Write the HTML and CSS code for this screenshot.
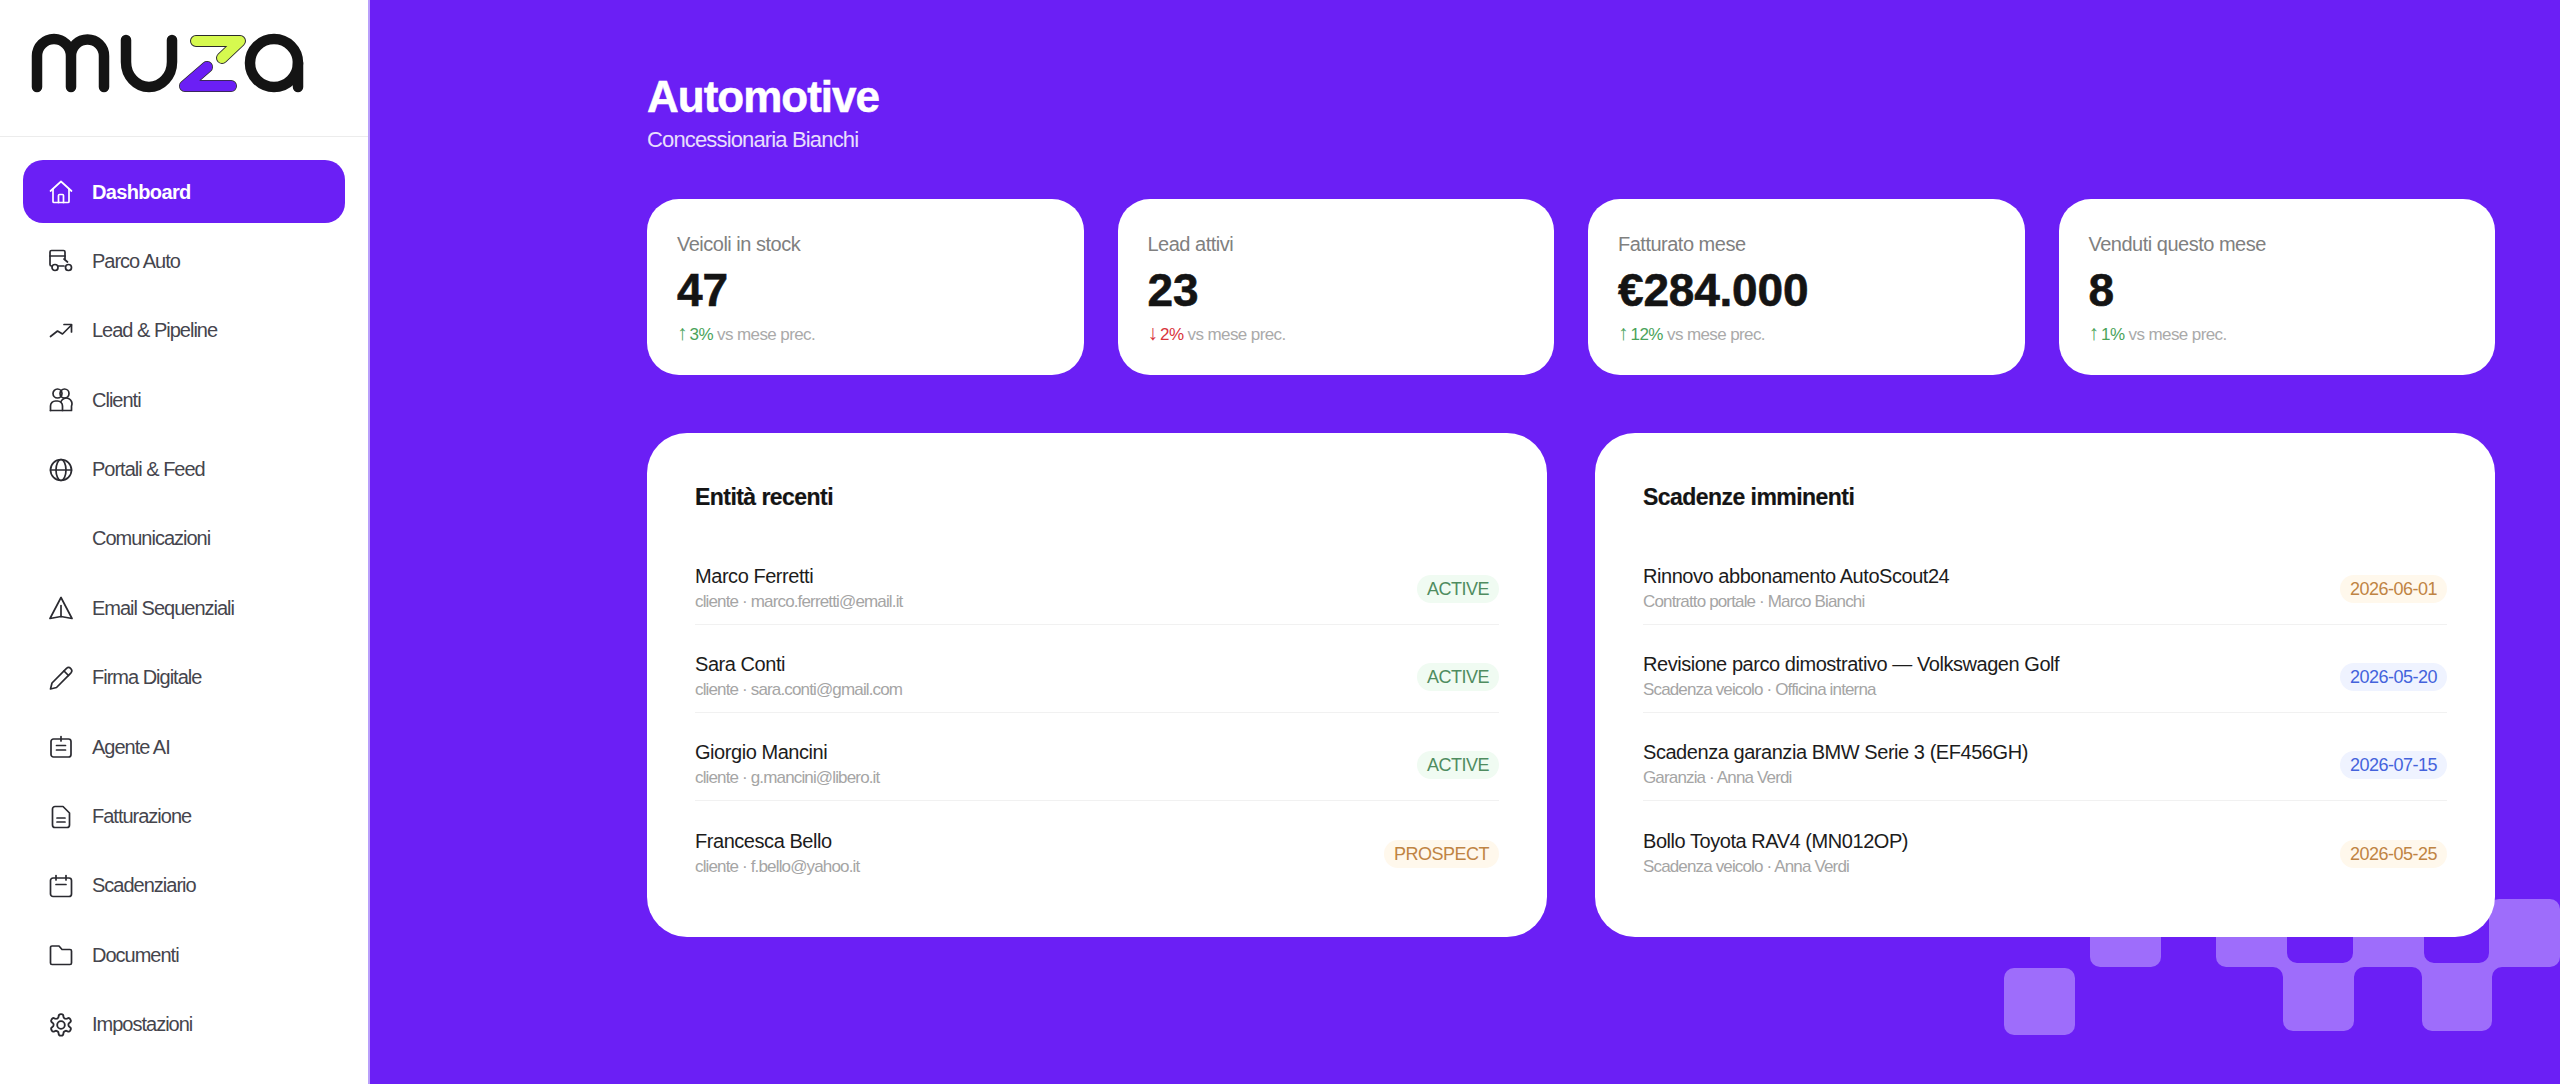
FILE: index.html
```html
<!DOCTYPE html>
<html lang="it">
<head>
    <meta charset="UTF-8">
    <meta name="viewport" content="width=device-width, initial-scale=1.0">
    <title>Muza - Automotive</title>
    <link rel="stylesheet" href="styles.css">
</head>
<body>
    <aside class="sidebar">
        <div class="logo">
            <svg class="logo-mark" viewBox="0 0 340 120" width="340" height="120" fill="none" stroke-linecap="round" stroke-linejoin="round">
                <path class="logo-ink" d="M37 87V56a16 16 0 0 1 34 0V87M71 56a16 16 0 0 1 33 0V87"/>
                <path class="logo-ink" d="M126 40V62a23 25 0 0 0 46 0V40"/>
                <circle class="logo-ink" cx="274" cy="63" r="24"/>
                <path class="logo-ink" d="M298 63V87"/>
                <path class="logo-edge" d="M196 41H240L222 58"/>
                <path class="logo-lime" d="M196 41H240L222 58"/>
                <path class="logo-edge" d="M207 67L185 86H231"/>
                <path class="logo-violet" d="M207 67L185 86H231"/>
            </svg>
        </div>
        <nav class="nav">
            <a class="nav-item active">
                <svg class="icon" viewBox="0 0 24 24"><path d="M1.500 11 12 1.500 22.500 11"/><path d="M4 8.800V21.500a1 1 0 0 0 1 1h14a1 1 0 0 0 1-1V8.800"/><path d="M9.500 22.500v-7a1 1 0 0 1 1-1h3a1 1 0 0 1 1 1v7"/></svg>
                <span>Dashboard</span>
            </a>
            <a class="nav-item">
                <svg class="icon" viewBox="0 0 24 24"><path d="M2.500 17A1.500 1.500 0 0 1 1 15.500V3A1.500 1.500 0 0 1 2.500 1.500h12A1.500 1.500 0 0 1 16 3v7"/><path d="M1 7h15"/><path d="M9 17h6"/><path d="M15 10l3.500 3"/><circle cx="6" cy="18.500" r="3"/><circle cx="19.500" cy="18.500" r="3"/></svg>
                <span>Parco Auto</span>
            </a>
            <a class="nav-item">
                <svg class="icon" viewBox="0 0 24 24"><path d="M1.500 17.500 8.500 12l5 3 9-9"/><path d="M15 5.500h7.500V13"/></svg>
                <span>Lead &amp; Pipeline</span>
            </a>
            <a class="nav-item">
                <svg class="icon" viewBox="0 0 24 24"><circle cx="8.500" cy="5.500" r="4.500"/><circle cx="15.500" cy="5.500" r="4.500"/><path d="M1.500 22.500V18a5 5 0 0 1 5-5h2a5 5 0 0 1 5 5v4.500"/><path d="M12 13.500a5 5 0 0 1 10.500 4.500v4.500H1.500"/></svg>
                <span>Clienti</span>
            </a>
            <a class="nav-item">
                <svg class="icon" viewBox="0 0 24 24"><circle cx="12" cy="12" r="10.500"/><ellipse cx="12" cy="12" rx="5" ry="10.500"/><path d="M1.500 12h21"/></svg>
                <span>Portali &amp; Feed</span>
            </a>
            <a class="nav-item">
                <span class="icon-blank"></span>
                <span>Comunicazioni</span>
            </a>
            <a class="nav-item">
                <svg class="icon" viewBox="0 0 24 24"><path d="M12 1.500 1 22.500 12 20.500l11 2Z"/><path d="M12 9.500v11"/></svg>
                <span>Email Sequenziali</span>
            </a>
            <a class="nav-item">
                <svg class="icon" viewBox="0 0 24 24"><path d="M17.500 2.300a3.200 3.200 0 0 1 4.500 4.500L7.500 21.500 1.500 23 3 17Z"/><path d="M15 5l4.500 4.500"/></svg>
                <span>Firma Digitale</span>
            </a>
            <a class="nav-item">
                <svg class="icon" viewBox="0 0 24 24"><rect x="2" y="4" width="20" height="18" rx="2.500"/><path d="M12 1.500V6"/><path d="M7.500 10.500h9"/><path d="M7.500 15h9"/></svg>
                <span>Agente AI</span>
            </a>
            <a class="nav-item">
                <svg class="icon" viewBox="0 0 24 24"><path d="M14 1.500H6A2.500 2.500 0 0 0 3.500 4v16A2.500 2.500 0 0 0 6 22.500h12a2.500 2.500 0 0 0 2.500-2.500V8Z"/><path d="M8 13h8"/><path d="M8 17h8"/></svg>
                <span>Fatturazione</span>
            </a>
            <a class="nav-item">
                <svg class="icon" viewBox="0 0 24 24"><rect x="1.500" y="4" width="21" height="18.500" rx="2.500"/><path d="M7 1.500V6"/><path d="M17 1.500V6"/><path d="M7 10.500h10"/></svg>
                <span>Scadenziario</span>
            </a>
            <a class="nav-item">
                <svg class="icon" viewBox="0 0 24 24"><path d="M21 21.500a1.500 1.500 0 0 0 1.500-1.500V8A1.500 1.500 0 0 0 21 6.500h-8L10 3H3A1.500 1.500 0 0 0 1.500 4.500V20A1.500 1.500 0 0 0 3 21.500Z"/></svg>
                <span>Documenti</span>
            </a>
            <a class="nav-item">
                <svg class="icon" viewBox="1 1 22 22"><path d="M12.200 2h-.4a2 2 0 0 0-2 2v.2a2 2 0 0 1-1 1.700l-.4.2a2 2 0 0 1-2 0l-.2-.1a2 2 0 0 0-2.700.7l-.2.400a2 2 0 0 0 .7 2.700l.2.100a2 2 0 0 1 1 1.700v.5a2 2 0 0 1-1 1.700l-.2.100a2 2 0 0 0-.7 2.700l.2.400a2 2 0 0 0 2.700.7l.2-.1a2 2 0 0 1 2 0l.4.2a2 2 0 0 1 1 1.700v.2a2 2 0 0 0 2 2h.4a2 2 0 0 0 2-2v-.2a2 2 0 0 1 1-1.700l.4-.2a2 2 0 0 1 2 0l.2.100a2 2 0 0 0 2.700-.7l.2-.4a2 2 0 0 0-.7-2.700l-.2-.1a2 2 0 0 1-1-1.700v-.5a2 2 0 0 1 1-1.700l.2-.1a2 2 0 0 0 .7-2.700l-.2-.4a2 2 0 0 0-2.700-.7l-.2.100a2 2 0 0 1-2 0l-.4-.2a2 2 0 0 1-1-1.700V4a2 2 0 0 0-2-2Z"/><circle cx="12" cy="12" r="3.500"/></svg>
                <span>Impostazioni</span>
            </a>
        </nav>
    </aside>

    <main class="main">
        <svg class="deco" viewBox="0 0 2560 1084" width="2560" height="1084">
            <rect x="2004" y="968" width="71" height="67" rx="10"/>
            <rect x="2090" y="900" width="71" height="67" rx="10"/>
            <path d="M2216 900H2287V953a10 10 0 0 0 10 10H2343a10 10 0 0 0 10-10V900H2424V953a10 10 0 0 0 10 10H2479a10 10 0 0 0 10-10V909a10 10 0 0 1 10-10H2550a10 10 0 0 1 10 10V957a10 10 0 0 1-10 10H2502a10 10 0 0 0-10 10V1021a10 10 0 0 1-10 10H2432a10 10 0 0 1-10-10V977a10 10 0 0 0-10-10H2364a10 10 0 0 0-10 10V1021a10 10 0 0 1-10 10H2293a10 10 0 0 1-10-10V977a10 10 0 0 0-10-10H2226a10 10 0 0 1-10-10Z"/>
        </svg>

        <div class="page-head">
            <h1>Automotive</h1>
            <p>Concessionaria Bianchi</p>
        </div>

        <div class="stats">
            <div class="stat">
                <div class="stat-label">Veicoli in stock</div>
                <div class="stat-value">47</div>
                <div class="stat-delta"><span class="up"><span class="arrow">↑</span> 3%</span> vs mese prec.</div>
            </div>
            <div class="stat">
                <div class="stat-label">Lead attivi</div>
                <div class="stat-value">23</div>
                <div class="stat-delta"><span class="down"><span class="arrow">↓</span> 2%</span> vs mese prec.</div>
            </div>
            <div class="stat">
                <div class="stat-label">Fatturato mese</div>
                <div class="stat-value">€284.000</div>
                <div class="stat-delta"><span class="up"><span class="arrow">↑</span> 12%</span> vs mese prec.</div>
            </div>
            <div class="stat">
                <div class="stat-label">Venduti questo mese</div>
                <div class="stat-value">8</div>
                <div class="stat-delta"><span class="up"><span class="arrow">↑</span> 1%</span> vs mese prec.</div>
            </div>
        </div>

        <div class="panels">
            <section class="panel">
                <h2>Entità recenti</h2>
                <div class="row">
                    <div><div class="row-name">Marco Ferretti</div><div class="row-sub">cliente · marco.ferretti@email.it</div></div>
                    <span class="badge green">ACTIVE</span>
                </div>
                <div class="row">
                    <div><div class="row-name">Sara Conti</div><div class="row-sub">cliente · sara.conti@gmail.com</div></div>
                    <span class="badge green">ACTIVE</span>
                </div>
                <div class="row">
                    <div><div class="row-name">Giorgio Mancini</div><div class="row-sub">cliente · g.mancini@libero.it</div></div>
                    <span class="badge green">ACTIVE</span>
                </div>
                <div class="row">
                    <div><div class="row-name">Francesca Bello</div><div class="row-sub">cliente · f.bello@yahoo.it</div></div>
                    <span class="badge orange">PROSPECT</span>
                </div>
            </section>
            <section class="panel">
                <h2>Scadenze imminenti</h2>
                <div class="row">
                    <div><div class="row-name">Rinnovo abbonamento AutoScout24</div><div class="row-sub">Contratto portale · Marco Bianchi</div></div>
                    <span class="badge orange">2026-06-01</span>
                </div>
                <div class="row">
                    <div><div class="row-name">Revisione parco dimostrativo — Volkswagen Golf</div><div class="row-sub">Scadenza veicolo · Officina interna</div></div>
                    <span class="badge blue">2026-05-20</span>
                </div>
                <div class="row">
                    <div><div class="row-name">Scadenza garanzia BMW Serie 3 (EF456GH)</div><div class="row-sub">Garanzia · Anna Verdi</div></div>
                    <span class="badge blue">2026-07-15</span>
                </div>
                <div class="row">
                    <div><div class="row-name">Bollo Toyota RAV4 (MN012OP)</div><div class="row-sub">Scadenza veicolo · Anna Verdi</div></div>
                    <span class="badge orange">2026-05-25</span>
                </div>
            </section>
        </div>
    </main>
</body>
</html>
```

FILE: styles.css
```css
* {
    box-sizing: border-box;
}

html, body {
    height: 100%;
}

body {
    margin: 0;
    display: flex;
    overflow: hidden;
    font-family: "Liberation Sans", Arial, sans-serif;
    background-color: #6b1ff5;
    color: #141414;
}

/* sidebar */
.sidebar {
    width: 370px;
    flex-shrink: 0;
    background-color: white;
    border-right: 2px solid #b99ffa;
}

.logo {
    height: 137px;
    border-bottom: 1px solid #ececec;
}

.logo-mark {
    display: block;
}

.logo-ink {
    stroke: #141414;
    stroke-width: 10.5;
}

.logo-edge {
    stroke: #2b2b2b;
    stroke-width: 12;
}

.logo-lime {
    stroke: #d6f94f;
    stroke-width: 10;
}

.logo-violet {
    stroke: #6b1ff5;
    stroke-width: 10.5;
}

.nav {
    display: flex;
    flex-direction: column;
    gap: 6.4px;
    padding: 23px 23px 0;
}

.nav-item {
    display: flex;
    align-items: center;
    gap: 19px;
    height: 63px;
    padding: 1px 0 0 26px;
    border-radius: 20px;
    font-size: 20px;
    letter-spacing: -1px;
    color: #45454d;
}

.nav-item.active {
    background-color: #6b1ff5;
    color: white;
    font-weight: bold;
    letter-spacing: -0.65px;
}

.icon {
    width: 24px;
    height: 24px;
    flex-shrink: 0;
    fill: none;
    stroke: #2a2a30;
    stroke-width: 1.7;
    stroke-linecap: round;
    stroke-linejoin: round;
}

.active .icon {
    stroke: white;
}

.icon-blank {
    width: 24px;
    flex-shrink: 0;
}

/* main */
.main {
    position: relative;
    flex: 1;
    padding: 71px 65px 0 277px;
}

.deco {
    position: absolute;
    top: 0;
    left: -370px;
    fill: #9e6dfb;
}

.page-head {
    position: relative;
    color: white;
    margin-bottom: 45px;
}

.page-head h1 {
    margin: 0 0 3px;
    font-size: 44px;
    line-height: 52px;
    letter-spacing: -1px;
    -webkit-text-stroke: 0.5px white;
}

.page-head p {
    margin: 0;
    font-size: 22px;
    line-height: 28px;
    letter-spacing: -0.85px;
    opacity: 0.85;
}

.stats {
    position: relative;
    display: grid;
    grid-template-columns: repeat(4, 1fr);
    gap: 34px;
    margin-bottom: 58px;
}

.stat {
    height: 176px;
    padding: 31px 30px 29px;
    background-color: white;
    border-radius: 32px;
}

.stat-label {
    font-size: 20px;
    line-height: 28px;
    letter-spacing: -0.5px;
    color: #808080;
}

.stat-value {
    margin: 7px 0 7px;
    font-size: 46px;
    line-height: 50px;
    font-weight: bold;
    letter-spacing: -0.2px;
    -webkit-text-stroke: 0.6px #141414;
}

.stat-delta {
    font-size: 17px;
    line-height: 24px;
    letter-spacing: -0.6px;
    color: #aaa;
}

.arrow {
    font-size: 21px;
    line-height: 1;
    letter-spacing: -2px;
}

.up {
    color: #4aa35a;
}

.down {
    color: #d8343c;
}

.panels {
    position: relative;
    display: grid;
    grid-template-columns: 1fr 1fr;
    gap: 48px;
}

.panel {
    height: 504px;
    padding: 48px;
    background-color: white;
    border-radius: 40px;
}

.panel h2 {
    margin: 0 0 24px;
    font-size: 23px;
    line-height: 32px;
    letter-spacing: -0.55px;
    -webkit-text-stroke: 0.2px #141414;
}

.row {
    display: flex;
    align-items: center;
    justify-content: space-between;
    height: 88px;
    padding: 26px 0 9px;
    border-bottom: 1px solid #f1f1f1;
}

.row:last-child {
    border-bottom: none;
}

.row-name {
    font-size: 20px;
    line-height: 26px;
    letter-spacing: -0.45px;
    color: #1c1c1c;
}

.row-sub {
    font-size: 17px;
    line-height: 26px;
    letter-spacing: -0.85px;
    color: #a5a5a5;
}

.badge {
    height: 28px;
    padding: 0 10px;
    border-radius: 14px;
    font-size: 18px;
    line-height: 28px;
    letter-spacing: -0.5px;
}

.green {
    background-color: #f0fbf2;
    color: #4f8c60;
}

.orange {
    background-color: #fff8ec;
    color: #bf8443;
}

.blue {
    background-color: #eff3ff;
    color: #4463dc;
}
```
